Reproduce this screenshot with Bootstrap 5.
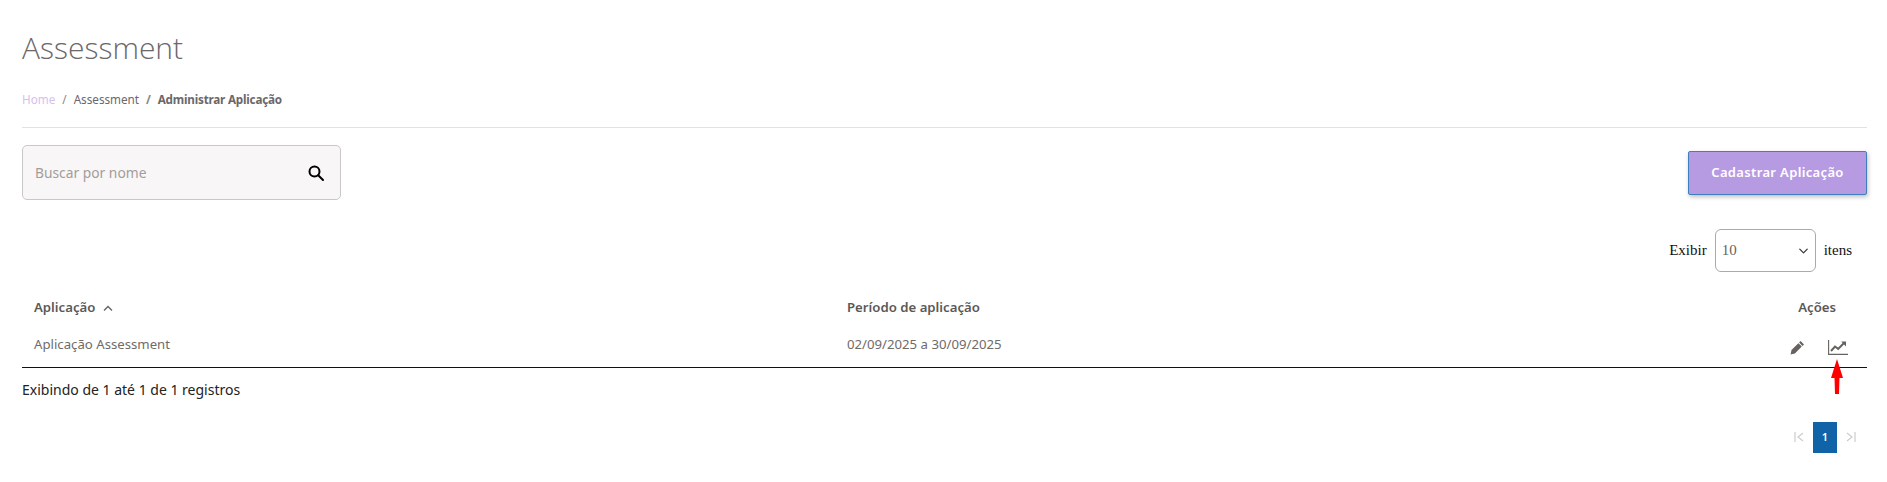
<!DOCTYPE html>
<html lang="pt-BR">
<head>
    <meta charset="UTF-8">
    <meta name="viewport" content="width=device-width, initial-scale=1.0">
    <title>Assessment</title>
    <link href="https://cdn.jsdelivr.net/npm/bootstrap@5.3.0/dist/css/bootstrap.min.css" rel="stylesheet">
    <style>
        body {
            font-family: "Noto Sans", "Open Sans", sans-serif;
            background: #fff;
            color: #6b676a;
            height: 482px;
            overflow: hidden;
        }
        .page-wrap {
            padding: 26px 20px 0 22px;
        }
        .page-title {
            font-family: "Open Sans", sans-serif;
            font-size: 30px;
            font-weight: 300;
            line-height: 44px;
            margin: 0 0 19px;
            color: #6b676a;
        }
        .crumbs {
            font-size: 11.7px;
            line-height: 20px;
            margin: 0;
            --bs-breadcrumb-divider-color: #8a8688;
            --bs-breadcrumb-item-padding-x: 7px;
            --bs-breadcrumb-margin-bottom: 0;
        }
        .crumbs a {
            color: #d5bfee;
            text-decoration: none;
        }
        .crumbs .breadcrumb-item.active {
            color: #6b676a;
            font-weight: 700;
            letter-spacing: -.2px;
        }
        .crumbs .crumb-mid {
            color: #6b676a;
        }
        .top-rule {
            margin: 18px 0 17px;
            border-top: 1px solid #e2e2e2;
            opacity: 1;
        }
        .search-box {
            width: 319px;
            height: 55px;
            background: #f8f6f7;
            border: 1px solid #c9c7c7;
            border-radius: 5px;
            padding: 1px 16px 0 12px;
            font-size: 13.8px;
            color: #a39d9a;
        }
        .btn-cadastrar {
            width: 179px;
            height: 44px;
            margin-top: 6px;
            background: #b79be2;
            border: 1px solid #3f7fc0;
            border-radius: 2px;
            color: #fff;
            font-size: 13px;
            font-weight: 600;
            letter-spacing: .35px;
            padding: 0;
            box-shadow: 1px 2px 4px rgba(0, 0, 0, .25);
        }
        .length-row {
            margin-top: 29px;
            padding-right: 15px;
            font-family: "Liberation Serif", serif;
            font-size: 15px;
            color: #111;
        }
        .length-select {
            width: 101px;
            height: 43px;
            padding: 0 6px;
            border: 1px solid #aaa;
            border-radius: 6px;
            font-family: "Liberation Serif", serif;
            font-size: 15px;
            color: #67625f;
            background-position: right 5px center;
            background-size: 13px 10px;
        }
        .data-table {
            margin: 16px 0 0;
            table-layout: fixed;
            --bs-table-color: #67625f;
            font-size: 13.2px;
        }
        .data-table th {
            height: 44px;
            padding: 0 12px 4px;
            font-weight: 600;
            border: 0;
            color: #5d5855;
            vertical-align: middle;
        }
        .data-table td {
            height: 35px;
            padding: 0 12px 9px;
            border: 0;
            vertical-align: middle;
            color: #706b68;
        }
        .data-table tbody tr {
            border-bottom: 1px solid #111;
        }
        .col-name { width: 813px; }
        .col-acoes { width: 130px; }
        .acoes-head {
            text-align: right;
            padding-right: 31px !important;
        }
        .data-table .acoes-cell {
            text-align: right;
            padding-right: 19px;
            padding-bottom: 5px;
            white-space: nowrap;
        }
        .acoes-cell svg { vertical-align: middle; }
        .acoes-cell .icon-pencil { margin-right: 20px; }
        .sort-up { margin-left: 4px; }
        .info-line {
            font-size: 14px;
            line-height: 20px;
            margin-top: 12px;
            color: #222;
        }
        .pager {
            --bs-pagination-padding-x: 0;
            --bs-pagination-padding-y: 0;
            --bs-pagination-border-width: 0;
            --bs-pagination-bg: transparent;
            --bs-pagination-color: #ccc;
            --bs-pagination-disabled-bg: transparent;
            --bs-pagination-disabled-color: #ccc;
            --bs-pagination-active-bg: #0f63a6;
            --bs-pagination-active-color: #fff;
            --bs-pagination-font-size: 11px;
            margin: 22px 0 0;
            padding-right: 1px;
        }
        .pager .page-link {
            width: 30px;
            height: 31px;
            display: flex;
            align-items: center;
            justify-content: center;
            border-radius: 0 !important;
            font-weight: 600;
            margin: 0;
        }
        .pager .active .page-link { width: 24px; }
        .arrow-mark {
            position: absolute;
            left: 1831px;
            top: 359px;
        }
    </style>
</head>
<body>
    <div class="page-wrap">
        <h1 class="page-title">Assessment</h1>
        <nav aria-label="breadcrumb">
            <ol class="breadcrumb crumbs">
                <li class="breadcrumb-item"><a href="#">Home</a></li>
                <li class="breadcrumb-item crumb-mid">Assessment</li>
                <li class="breadcrumb-item active" aria-current="page">Administrar Aplicação</li>
            </ol>
        </nav>
        <hr class="top-rule">

        <div class="d-flex justify-content-between align-items-start">
            <div class="search-box d-flex align-items-center justify-content-between">
                <span>Buscar por nome</span>
                <svg width="16" height="16" viewBox="0 0 16 16" fill="none" stroke="#000" stroke-width="2">
                    <circle cx="6.5" cy="6.5" r="5"/>
                    <path d="M10.2 10.2 15 15" stroke-linecap="round"/>
                </svg>
            </div>
            <button class="btn btn-cadastrar" type="button">Cadastrar Aplicação</button>
        </div>

        <div class="length-row d-flex justify-content-end align-items-center gap-2">
            <span>Exibir</span>
            <select class="form-select length-select" aria-label="Exibir">
                <option>10</option>
            </select>
            <span>itens</span>
        </div>

        <table class="table data-table">
            <colgroup>
                <col class="col-name">
                <col>
                <col class="col-acoes">
            </colgroup>
            <thead>
                <tr>
                    <th>Aplicação
                        <svg class="sort-up" width="10" height="7" viewBox="0 0 10 7" fill="none" stroke="#67625f" stroke-width="1.3"><path d="M1 5.5 5 1.5l4 4"/></svg>
                    </th>
                    <th>Período de aplicação</th>
                    <th class="acoes-head">Ações</th>
                </tr>
            </thead>
            <tbody>
                <tr>
                    <td>Aplicação Assessment</td>
                    <td>02/09/2025 a 30/09/2025</td>
                    <td class="acoes-cell">
                        <svg class="icon-pencil" width="15" height="15" viewBox="0 0 15 15" fill="#67625f">
                            <path d="M10.6 1 14 4.4l-1.5 1.5-3.4-3.4zM8.4 3.2l3.4 3.4-6.900 6.900L.6 14.4l.9-4.3z"/>
                        </svg>
                        <svg width="20" height="15" viewBox="0 0 20 15" fill="none">
                            <path d="M.6 0v14.4H20" stroke="#67625f" stroke-width="1.1"/>
                            <path d="M3 11 7 6.5l3.2 2.4L16 3" stroke="#67625f" stroke-width="2"/>
                            <path d="M13.2 1.6H18v4.8z" fill="#67625f"/>
                        </svg>
                    </td>
                </tr>
            </tbody>
        </table>

        <div class="info-line">Exibindo de 1 até 1 de 1 registros</div>

        <ul class="pagination pager justify-content-end">
            <li class="page-item disabled"><a class="page-link" href="#" aria-label="Primeira">
                <svg width="10" height="10" viewBox="0 0 10 10" fill="none" stroke="#ccc" stroke-width="1.2"><path d="M1 0v10M9 1 4 5l5 4"/></svg>
            </a></li>
            <li class="page-item active"><a class="page-link" href="#">1</a></li>
            <li class="page-item disabled"><a class="page-link" href="#" aria-label="Última">
                <svg width="10" height="10" viewBox="0 0 10 10" fill="none" stroke="#ccc" stroke-width="1.2"><path d="M1 1l5 4-5 4M9 0v10"/></svg>
            </a></li>
        </ul>
    </div>

    <!-- seta vermelha por cima da tabela -->
    <svg class="arrow-mark" width="12" height="36" viewBox="0 0 12 36">
        <path d="M6 0 12 19H8.5L8 35H4L3.500 19H0z" fill="#f00"/>
    </svg>

    <script src="https://cdn.jsdelivr.net/npm/bootstrap@5.3.0/dist/js/bootstrap.bundle.min.js"></script>
</body>
</html>
